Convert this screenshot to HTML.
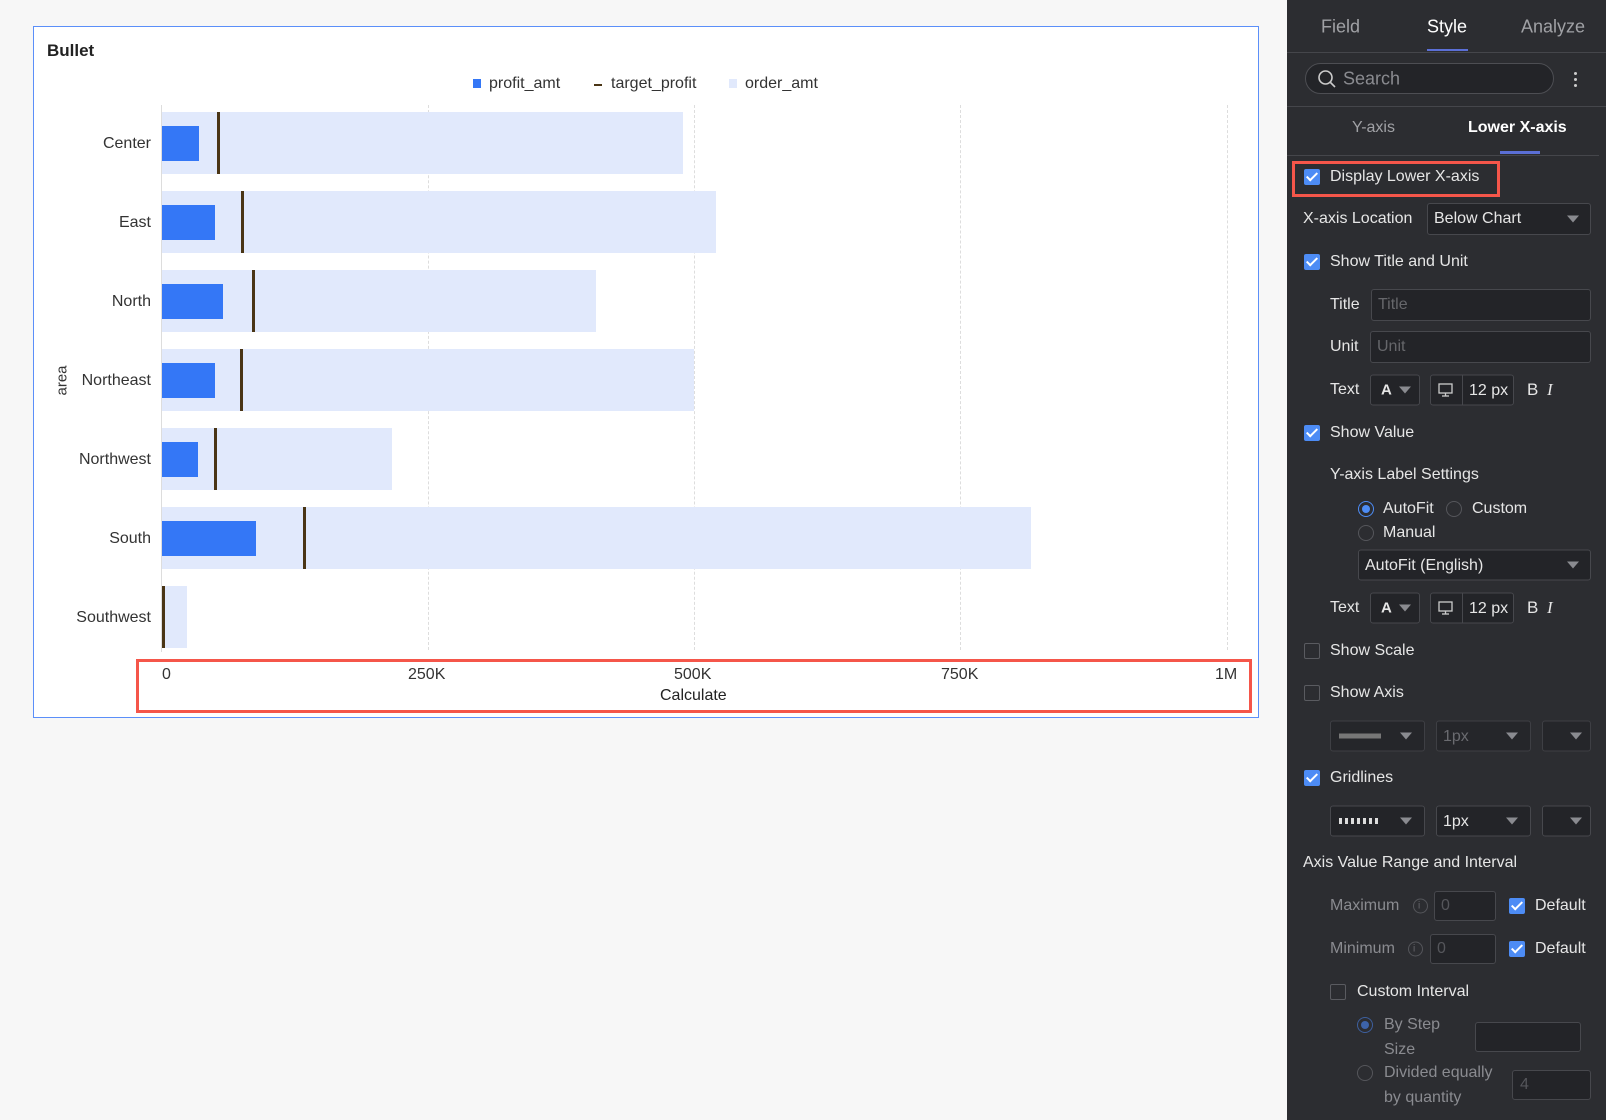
<!DOCTYPE html>
<html><head><meta charset="utf-8"><style>
*{box-sizing:border-box;margin:0;padding:0}
body{width:1606px;height:1120px;background:#f7f7f7;font-family:"Liberation Sans",sans-serif;position:relative;overflow:hidden}
.a{position:absolute;white-space:nowrap}
#chart{position:absolute;left:33px;top:26px;width:1226px;height:692px;background:#fff;border:1.5px solid #5b8ff9}
.bg{position:absolute;background:#e1e9fc;height:62px}
.bl{position:absolute;background:#3477f6;height:35px}
.tg{position:absolute;width:2.5px;background:#4a3515;height:62px}
.grid{position:absolute;top:105px;height:545px;border-left:1px dashed #ddd}
.yl{position:absolute;right:1455px;font-size:16px;color:#333;transform:translateY(-50%);white-space:nowrap}
#panel{position:absolute;left:1287px;top:0;width:319px;height:1120px;background:#2c2d31;color:#e6e6e6;font-size:16px}
#panel .a{transform:translateY(-50%)}
.cb{position:absolute;width:16px;height:16px;border-radius:2px;background:#4d8cf5;transform:translateY(-50%)}
.cb::after{content:"";position:absolute;left:5px;top:1px;width:4px;height:9px;border:solid #fff;border-width:0 2px 2px 0;transform:rotate(45deg)}
.cbo{position:absolute;width:16px;height:16px;border-radius:2px;border:1px solid #5a5b60;transform:translateY(-50%)}
.inp{position:absolute;background:#232428;border:1px solid #47484d;border-radius:3px;transform:translateY(-50%)}
.tri{position:absolute;width:0;height:0;border-left:6px solid transparent;border-right:6px solid transparent;border-top:7px solid #8a8b90;transform:translateY(-50%)}
.rd{position:absolute;width:16px;height:16px;border-radius:50%;border:1px solid #55565b;transform:translateY(-50%)}
.dim{color:#8a8b90}
#panel .nt{transform:none}
</style></head><body>
<div id="chart">
<div class="a" style="left:13px;top:14px;font-size:17px;font-weight:bold;color:#222">Bullet</div>
</div>
<div class="a" style="left:473px;top:79px;width:8px;height:9px;background:#3477f6"></div>
<div class="a" style="left:489px;top:75px;font-size:16px;color:#333">profit_amt</div>
<div class="a" style="left:594px;top:84px;width:8px;height:2px;background:#4a3515"></div>
<div class="a" style="left:611px;top:75px;font-size:16px;color:#333">target_profit</div>
<div class="a" style="left:729px;top:79px;width:8px;height:9px;background:#e1e9fc"></div>
<div class="a" style="left:745px;top:75px;font-size:16px;color:#333">order_amt</div>
<div class="grid" style="left:428px"></div><div class="grid" style="left:694px"></div><div class="grid" style="left:960px"></div><div class="grid" style="left:1227px"></div>
<div class="a" style="left:161px;top:105px;width:1px;height:547px;background:#ddd"></div>
<div class="bg" style="left:162px;top:112px;width:521px"></div><div class="bl" style="left:162px;top:126px;width:37px"></div><div class="tg" style="left:217px;top:112px"></div>
<div class="bg" style="left:162px;top:191px;width:554px"></div><div class="bl" style="left:162px;top:205px;width:53px"></div><div class="tg" style="left:241px;top:191px"></div>
<div class="bg" style="left:162px;top:270px;width:434px"></div><div class="bl" style="left:162px;top:284px;width:61px"></div><div class="tg" style="left:252px;top:270px"></div>
<div class="bg" style="left:162px;top:349px;width:532px"></div><div class="bl" style="left:162px;top:363px;width:53px"></div><div class="tg" style="left:240px;top:349px"></div>
<div class="bg" style="left:162px;top:428px;width:230px"></div><div class="bl" style="left:162px;top:442px;width:36px"></div><div class="tg" style="left:214px;top:428px"></div>
<div class="bg" style="left:162px;top:507px;width:869px"></div><div class="bl" style="left:162px;top:521px;width:94px"></div><div class="tg" style="left:303px;top:507px"></div>
<div class="bg" style="left:162px;top:586px;width:25px"></div><div class="tg" style="left:162px;top:586px"></div>
<div class="yl" style="top:144px">Center</div><div class="yl" style="top:223px">East</div><div class="yl" style="top:302px">North</div><div class="yl" style="top:381px">Northeast</div><div class="yl" style="top:460px">Northwest</div><div class="yl" style="top:539px">South</div><div class="yl" style="top:618px">Southwest</div>
<div class="a" style="left:47px;top:372px;font-size:15px;color:#333;transform:rotate(-90deg)">area</div>
<div class="a" style="left:162px;top:666px;font-size:16px;color:#333">0</div>
<div class="a" style="left:408px;top:666px;font-size:16px;color:#333">250K</div>
<div class="a" style="left:674px;top:666px;font-size:16px;color:#333">500K</div>
<div class="a" style="left:941px;top:666px;font-size:16px;color:#333">750K</div>
<div class="a" style="left:1215px;top:666px;font-size:16px;color:#333">1M</div>
<div class="a" style="left:660px;top:687px;font-size:16px;color:#222">Calculate</div>
<div class="a" style="left:136px;top:659px;width:1116px;height:54px;border:3.5px solid #f5564a"></div>

<div id="panel">
<div class="a" style="left:34px;top:27px;font-size:18px;color:#a0a1a5">Field</div>
<div class="a" style="left:140px;top:27px;font-size:18px;color:#fff">Style</div>
<div class="a" style="left:234px;top:27px;font-size:18px;color:#a0a1a5">Analyze</div>
<div class="a nt" style="left:140px;top:49px;width:41px;height:2px;background:#5b6fd6"></div>
<div class="a nt" style="left:0;top:52px;width:319px;height:1px;background:#45464b"></div>
<div class="a nt" style="left:18px;top:63px;width:249px;height:31px;border:1px solid #4d4e53;border-radius:16px;background:#232428"></div>
<svg class="a nt" style="left:30px;top:69px" width="20" height="20" viewBox="0 0 20 20"><circle cx="8.5" cy="8.5" r="6.5" fill="none" stroke="#ccc" stroke-width="1.6"/><line x1="13.5" y1="13.5" x2="18" y2="18" stroke="#ccc" stroke-width="1.6"/></svg>
<div class="a dim" style="left:56px;top:79px;font-size:18px">Search</div>
<div class="a nt" style="left:287px;top:72px;width:3px;height:3px;background:#ccc;border-radius:50%;box-shadow:0 6px #ccc,0 12px #ccc"></div>
<div class="a nt" style="left:0;top:106px;width:319px;height:1px;background:#45464b"></div>
<div class="a" style="left:65px;top:128px;color:#a0a1a5">Y-axis</div>
<div class="a" style="left:181px;top:128px;color:#fff;font-weight:bold">Lower X-axis</div>
<div class="a nt" style="left:213px;top:151px;width:40px;height:3px;background:#5b6fd6"></div>
<div class="a nt" style="left:0;top:155px;width:312px;height:1px;background:#45464b"></div>
<div class="a nt" style="left:5px;top:161px;width:208px;height:36px;border:3px solid #f5564a"></div>
<div class="cb" style="left:17px;top:177px"></div><div class="a" style="left:43px;top:177px">Display Lower X-axis</div>
<div class="a" style="left:16px;top:219px">X-axis Location</div>
<div class="inp" style="left:140px;top:219px;width:164px;height:32px"></div><div class="a" style="left:147px;top:219px">Below Chart</div><div class="tri" style="left:280px;top:219px"></div>
<div class="cb" style="left:17px;top:262px"></div><div class="a" style="left:43px;top:262px">Show Title and Unit</div>
<div class="a" style="left:43px;top:305px">Title</div><div class="inp" style="left:84px;top:305px;width:220px;height:32px"></div><div class="a" style="left:91px;top:305px;color:#66676b">Title</div>
<div class="a" style="left:43px;top:347px">Unit</div><div class="inp" style="left:83px;top:347px;width:221px;height:32px"></div><div class="a" style="left:90px;top:347px;color:#66676b">Unit</div>
<div class="a" style="left:43px;top:390px">Text</div>
<div class="inp" style="left:83px;top:390px;width:50px;height:31px"></div><div class="a" style="left:94px;top:390px;font-size:15px;font-weight:bold">A</div><div class="tri" style="left:112px;top:390px"></div>
<div class="inp" style="left:143px;top:390px;width:84px;height:31px"></div><div class="a" style="left:175px;top:390px;width:1px;height:31px;background:#47484d"></div>
<svg class="a nt" style="left:150px;top:382px" width="17" height="16" viewBox="0 0 17 16"><rect x="2" y="2" width="13" height="9" fill="none" stroke="#ccc" stroke-width="1.3"/><line x1="5" y1="14" x2="12" y2="14" stroke="#ccc" stroke-width="1.3"/><line x1="8.5" y1="11" x2="8.5" y2="14" stroke="#ccc" stroke-width="1.3"/></svg>
<div class="a" style="left:182px;top:391px">12 px</div><div class="a" style="left:240px;top:390px;font-size:17px">B</div><div class="a" style="left:260px;top:390px;font-size:17px;font-style:italic;font-family:'Liberation Serif',serif">I</div>
<div class="cb" style="left:17px;top:433px"></div><div class="a" style="left:43px;top:433px">Show Value</div>
<div class="a" style="left:43px;top:475px">Y-axis Label Settings</div>
<div class="rd" style="left:71px;top:509px;border:1px solid #4d8cf5"></div><div class="a" style="left:75px;top:509px;width:8px;height:8px;border-radius:50%;background:#4d8cf5"></div>
<div class="a" style="left:96px;top:509px">AutoFit</div>
<div class="rd" style="left:159px;top:509px"></div><div class="a" style="left:185px;top:509px">Custom</div>
<div class="rd" style="left:71px;top:533px"></div><div class="a" style="left:96px;top:533px">Manual</div>
<div class="inp" style="left:71px;top:565px;width:233px;height:31px"></div><div class="a" style="left:78px;top:566px">AutoFit (English)</div><div class="tri" style="left:280px;top:565px"></div>
<div class="a" style="left:43px;top:608px">Text</div>
<div class="inp" style="left:83px;top:608px;width:50px;height:31px"></div><div class="a" style="left:94px;top:608px;font-size:15px;font-weight:bold">A</div><div class="tri" style="left:112px;top:608px"></div>
<div class="inp" style="left:143px;top:608px;width:84px;height:31px"></div><div class="a" style="left:175px;top:608px;width:1px;height:31px;background:#47484d"></div>
<svg class="a nt" style="left:150px;top:600px" width="17" height="16" viewBox="0 0 17 16"><rect x="2" y="2" width="13" height="9" fill="none" stroke="#ccc" stroke-width="1.3"/><line x1="5" y1="14" x2="12" y2="14" stroke="#ccc" stroke-width="1.3"/><line x1="8.5" y1="11" x2="8.5" y2="14" stroke="#ccc" stroke-width="1.3"/></svg>
<div class="a" style="left:182px;top:609px">12 px</div><div class="a" style="left:240px;top:608px;font-size:17px">B</div><div class="a" style="left:260px;top:608px;font-size:17px;font-style:italic;font-family:'Liberation Serif',serif">I</div>
<div class="cbo" style="left:17px;top:651px"></div><div class="a" style="left:43px;top:651px">Show Scale</div>
<div class="cbo" style="left:17px;top:693px"></div><div class="a" style="left:43px;top:693px">Show Axis</div>
<div class="inp" style="left:43px;top:736px;width:95px;height:31px;opacity:.7"></div><div class="a" style="left:52px;top:736px;width:42px;height:5px;background:#777"></div><div class="tri" style="left:113px;top:736px"></div>
<div class="inp" style="left:149px;top:736px;width:95px;height:31px;opacity:.7"></div><div class="a" style="left:156px;top:737px;color:#6a6b70">1px</div><div class="tri" style="left:219px;top:736px"></div>
<div class="inp" style="left:255px;top:736px;width:49px;height:31px;opacity:.7"></div><div class="tri" style="left:283px;top:736px"></div>
<div class="cb" style="left:17px;top:778px"></div><div class="a" style="left:43px;top:778px">Gridlines</div>
<div class="inp" style="left:43px;top:821px;width:95px;height:31px"></div><div class="a" style="left:52px;top:821px;width:40px;height:6px;background:repeating-linear-gradient(90deg,#ddd 0 3px,transparent 3px 6px)"></div><div class="tri" style="left:113px;top:821px"></div>
<div class="inp" style="left:149px;top:821px;width:95px;height:31px"></div><div class="a" style="left:156px;top:822px">1px</div><div class="tri" style="left:219px;top:821px"></div>
<div class="inp" style="left:255px;top:821px;width:49px;height:31px"></div><div class="tri" style="left:283px;top:821px"></div>
<div class="a" style="left:16px;top:863px">Axis Value Range and Interval</div>
<div class="a dim" style="left:43px;top:906px">Maximum</div><div class="rd" style="left:126px;top:906px;width:15px;height:15px"></div><div class="a" style="left:131px;top:906px;font-size:10px;color:#66676b">i</div><div class="inp" style="left:147px;top:906px;width:62px;height:30px"></div><div class="a" style="left:154px;top:906px;color:#55565b">0</div>
<div class="cb" style="left:222px;top:906px"></div><div class="a" style="left:248px;top:906px">Default</div>
<div class="a dim" style="left:43px;top:949px">Minimum</div><div class="rd" style="left:121px;top:949px;width:15px;height:15px"></div><div class="a" style="left:126px;top:949px;font-size:10px;color:#66676b">i</div><div class="inp" style="left:143px;top:949px;width:66px;height:30px"></div><div class="a" style="left:150px;top:949px;color:#55565b">0</div>
<div class="cb" style="left:222px;top:949px"></div><div class="a" style="left:248px;top:949px">Default</div>
<div class="cbo" style="left:43px;top:992px"></div><div class="a" style="left:70px;top:992px">Custom Interval</div>
<div class="rd" style="left:70px;top:1025px;border-color:#3d5f9e"></div><div class="a" style="left:74px;top:1025px;width:8px;height:8px;border-radius:50%;background:#3d63a8"></div>
<div class="a dim" style="left:97px;top:1025px">By Step</div><div class="a dim" style="left:97px;top:1050px">Size</div>
<div class="inp" style="left:188px;top:1037px;width:106px;height:30px"></div>
<div class="rd" style="left:70px;top:1073px"></div><div class="a dim" style="left:97px;top:1073px">Divided equally</div><div class="a dim" style="left:97px;top:1098px">by quantity</div>
<div class="inp" style="left:225px;top:1085px;width:79px;height:30px"></div><div class="a" style="left:233px;top:1085px;color:#55565b">4</div>
</div>
</body></html>
